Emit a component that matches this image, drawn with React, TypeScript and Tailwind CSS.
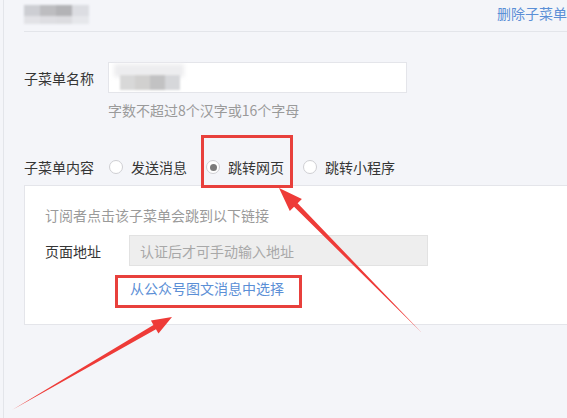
import React from "react";

type Pt = [number, number];

const arrowPoints = (tail: Pt, tip: Pt, headLen: number, headW: number, shaftW: number) => {
  const dx = tip[0] - tail[0];
  const dy = tip[1] - tail[1];
  const len = Math.sqrt(dx * dx + dy * dy);
  const ux = dx / len;
  const uy = dy / len;
  const nx = -uy;
  const ny = ux;
  const bx = tip[0] - ux * headLen;
  const by = tip[1] - uy * headLen;
  const pts: Pt[] = [
    tail,
    [bx + (nx * shaftW) / 2, by + (ny * shaftW) / 2],
    [bx + (nx * headW) / 2, by + (ny * headW) / 2],
    tip,
    [bx - (nx * headW) / 2, by - (ny * headW) / 2],
    [bx - (nx * shaftW) / 2, by - (ny * shaftW) / 2],
  ];
  return pts.map((p) => p.join(",")).join(" ");
};

const Radio = ({ checked }: { checked?: boolean }) => (
  <span className="flex h-[14px] w-[14px] shrink-0 items-center justify-center rounded-full border border-[#cfcfd3] bg-white">
    {checked && <span className="h-[7px] w-[7px] rounded-full bg-[#7b7b7b]" />}
  </span>
);

const RadioOption = ({ label, checked }: { label: string; checked?: boolean }) => (
  <label className="flex items-center">
    <Radio checked={checked} />
    <span className="ml-2 text-[#353535]">{label}</span>
  </label>
);

const App = () => {
  return (
    <div
      className="relative h-[418px] w-[567px] overflow-hidden bg-[#f4f5f9] text-[14px] leading-5"
      style={{ fontFamily: '"Noto Sans CJK SC", "Liberation Sans", sans-serif' }}
    >
      <div className="ml-[3px] h-full w-[640px] border-l border-[#e3e5ea] pl-5">
        {/* header */}
        <div className="flex h-[32px] items-start border-b border-[#e3e5ea]">
          <div className="mt-[5px] flex h-[19px] w-[65px] flex-col blur-[1px]">
            <div className="flex h-[11px]">
              <div className="w-[16px] bg-[#cdced3]" />
              <div className="w-[16px] bg-[#bdbdc0]" />
              <div className="w-[16px] bg-[#b3b3b6]" />
              <div className="w-[17px] bg-[#dcdde2]" />
            </div>
            <div className="flex h-[8px]">
              <div className="w-[16px] bg-[#e2e2e6]" />
              <div className="w-[16px] bg-[#dedee2]" />
              <div className="w-[16px] bg-[#dcdce0]" />
              <div className="w-[17px] bg-[#e6e7eb]" />
            </div>
          </div>
          <a className="ml-[408px] mt-[3px] whitespace-nowrap text-[#5b8fd6]" href="#">
            删除子菜单
          </a>
        </div>

        {/* name row */}
        <div className="mt-[30px] flex items-center">
          <span className="w-[84px] text-[#353535]">子菜单名称</span>
          <div className="relative h-[31px] w-[299px] border border-[#e4e5ea] bg-white">
            <div className="absolute left-[5px] top-[1px] h-[13px] w-[70px] bg-[#ededef] blur-[2px]" />
            <div className="absolute left-[11px] top-[12px] flex h-[15px] blur-[1px]">
              <div className="w-[15px] bg-[#d8d8d8]" />
              <div className="w-[15px] bg-[#d1d0cf]" />
              <div className="w-[15px] bg-[#c2c2c3]" />
              <div className="w-[15px] bg-[#d6d7da]" />
            </div>
          </div>
        </div>
        <div className="ml-[84px] mt-[7px] text-[#9a9a9a]">字数不超过8个汉字或16个字母</div>

        {/* content type */}
        <div className="mt-[37px] flex h-5 items-center">
          <span className="w-[85px] text-[#353535]">子菜单内容</span>
          <div className="flex items-center gap-[19px]">
            <RadioOption label="发送消息" />
            <RadioOption label="跳转网页" checked />
            <RadioOption label="跳转小程序" />
          </div>
        </div>

        {/* panel */}
        <div className="mt-[8px] h-[140px] border border-[#e4e5ea] bg-white pl-5 pt-[19px]">
          <div className="text-[#9a9a9a]">订阅者点击该子菜单会跳到以下链接</div>
          <div className="mt-[10px] flex items-center">
            <span className="w-[84px] text-[#353535]">页面地址</span>
            <div className="flex h-[31px] w-[299px] items-center border border-[#e2e2e2] bg-[#eeeeee] pl-[10px] text-[#a8a8a8]">
              认证后才可手动输入地址
            </div>
          </div>
          <a className="ml-[85px] mt-[12px] inline-block text-[#5b8fd6]" href="#">
            从公众号图文消息中选择
          </a>
        </div>
      </div>

      {/* annotations */}
      <div className="absolute left-[201px] top-[135px] h-[53px] w-[92px] border-[3px] border-[#e8403c]" />
      <div className="absolute left-[115px] top-[275px] h-[33px] w-[187px] border-[3px] border-[#e8403c]" />
      <svg className="pointer-events-none absolute left-0 top-0" width="567" height="418" viewBox="0 0 567 418">
        <polygon points={arrowPoints([422, 333], [279, 188], 24, 17, 5)} fill="#ee3b38" />
        <polygon points={arrowPoints([12, 410], [172, 317], 20, 15, 5)} fill="#ee3b38" />
      </svg>
    </div>
  );
};

export default App;
